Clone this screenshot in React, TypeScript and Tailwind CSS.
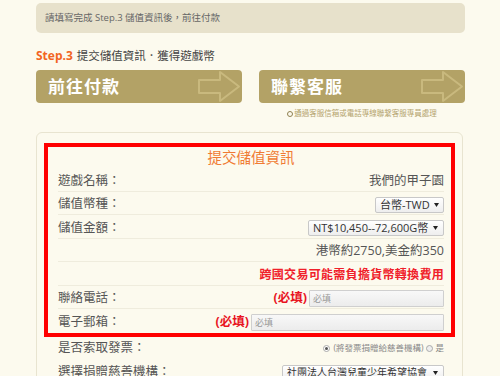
import React from "react";

const font = { fontFamily: '"Open Sans", "Noto Sans CJK TC", sans-serif' };

const Arrow = () => (
  <svg width="46" height="33" viewBox="0 0 46 33" className="absolute right-0 top-0">
    <path
      d="M3 10 H24 V2 L43 16.5 L24 31 V23 H3 Z"
      fill="none"
      stroke="#c9b97e"
      strokeWidth="2"
      strokeLinejoin="round"
    />
  </svg>
);

const BigButton = ({ label }: { label: string }) => (
  <div className="relative flex h-[33px] w-[206px] items-center overflow-hidden rounded-[4px] bg-[#b3a266] pl-[12px]">
    <span className="text-[17px] font-bold tracking-[1px] text-white">{label}</span>
    <Arrow />
  </div>
);

const Caret = () => (
  <svg width="5" height="4" viewBox="0 0 5 4" className="ml-[4px] shrink-0">
    <path d="M0 0 H5 L2.5 4 Z" fill="#222" />
  </svg>
);

const Select = ({ text, w }: { text: string; w: string }) => (
  <div
    className={`flex h-[16px] items-center justify-between overflow-hidden rounded-[2px] border border-[#c8c8c8] bg-gradient-to-b from-white to-[#eeeeee] pl-[4px] pr-[5px] text-[#333] ${w}`}
  >
    <span className="whitespace-nowrap">{text}</span>
    <Caret />
  </div>
);

const Input = ({ w }: { w: string }) => (
  <div
    className={`flex h-[17px] items-center rounded-[1px] border border-[#cfcfcf] bg-gradient-to-b from-[#f8f8f8] to-[#ececec] pl-[3px] text-[9px] text-[#999] ${w}`}
  >
    必填
  </div>
);

const Row = ({ label, children }: { label: string; children: React.ReactNode }) => (
  <div className="flex h-[23.5px] items-center justify-between border-b border-[#efecdd] pt-[4px] text-[12.5px] text-[#555]">
    <span>{label}</span>
    <div className="flex items-center gap-[2px]">{children}</div>
  </div>
);

export default function App() {
  return (
    <div className="h-[376px] w-[500px] overflow-hidden bg-[#fcfaee]" style={font}>
      <div className="mx-[36px] w-[429px] pt-[3px]">
        <div className="flex h-[30px] items-center rounded-[5px] bg-[#e7e1cb] pl-[9px] text-[9.5px] text-[#666]">
          請填寫完成 Step.3 儲值資訊後，前往付款
        </div>

        <div className="mt-[15px] flex h-[16px] items-center text-[11.5px] text-[#444]">
          <span className="mr-[4px] text-[12px] font-bold text-[#f26522]">Step.3</span>
          提交儲值資訊．獲得遊戲幣
        </div>

        <div className="mt-[6px] flex justify-between">
          <BigButton label="前往付款" />
          <BigButton label="聯繫客服" />
        </div>

        <div className="mt-[5px] flex h-[12px] justify-end">
          <div className="flex w-[206px] justify-center">
            <span className="flex items-center text-[7.5px] text-[#b5a46f]">
              <span className="mr-[1px] inline-block h-[6px] w-[6px] rounded-full border-[1.5px] border-[#8f8050]" />
              通過客服信箱或電話專線聯繫客服專員處理
            </span>
          </div>
        </div>

        <div className="mt-[12px] w-[427px] rounded-[6px] border border-[#e8e4d0] px-[7px] pt-[10px]">
          <div className="border-[4px] border-[#ff0000] pl-[10px] pr-[7px]">
            <div className="flex h-[21px] items-center justify-center text-[14.5px] text-[#f07a33]">
              提交儲值資訊
            </div>
            <Row label="遊戲名稱：">
              <span className="text-[12.5px] text-[#555]">我們的甲子園</span>
            </Row>
            <Row label="儲值幣種：">
              <Select text="台幣-TWD" w="w-[69px] text-[11px]" />
            </Row>
            <Row label="儲值金額：">
              <Select text="NT$10,450--72,600G幣" w="w-[136px] text-[11px]" />
            </Row>
            <Row label="">
              <span className="text-[12.5px] text-[#555]">港幣約2750,美金約350</span>
            </Row>
            <Row label="">
              <span className="text-[12px] font-bold tracking-[0.3px] text-[#f0202a]">
                跨國交易可能需負擔貨幣轉換費用
              </span>
            </Row>
            <Row label="聯絡電話：">
              <span className="text-[12.5px] font-bold text-[#e8141e]">(必填)</span>
              <Input w="w-[135px]" />
            </Row>
            <div className="flex h-[23.5px] items-center justify-between pt-[4px] text-[12.5px] text-[#555]">
              <span>電子郵箱：</span>
              <div className="flex items-center gap-[2px]">
                <span className="text-[12.5px] font-bold text-[#e8141e]">(必填)</span>
                <Input w="w-[193px]" />
              </div>
            </div>
          </div>

          <div className="pl-[14px] pr-[11px]">
            <div className="flex h-[22px] items-center justify-between pt-[2px] text-[12.5px] text-[#555]">
              <span>是否索取發票：</span>
              <span className="flex items-center text-[8.5px] text-[#888]">
                <span className="mr-[3px] inline-flex h-[7px] w-[7px] items-center justify-center rounded-full border border-[#aaa] bg-white">
                  <span className="h-[3px] w-[3px] rounded-full bg-[#555]" />
                </span>
                (將發票捐贈給慈善機構)
                <span className="ml-[3px] mr-[2px] inline-block h-[7px] w-[7px] rounded-full border border-[#aaa] bg-[#eee]" />
                是
              </span>
            </div>
            <div className="flex h-[24px] items-center justify-between pt-[4px] text-[12.5px] text-[#555]">
              <span>選擇捐贈慈善機構：</span>
              <Select text="社團法人台灣兒童少年希望協會" w="w-[162px] text-[10px]" />
            </div>
          </div>
        </div>
      </div>
    </div>
  );
}
